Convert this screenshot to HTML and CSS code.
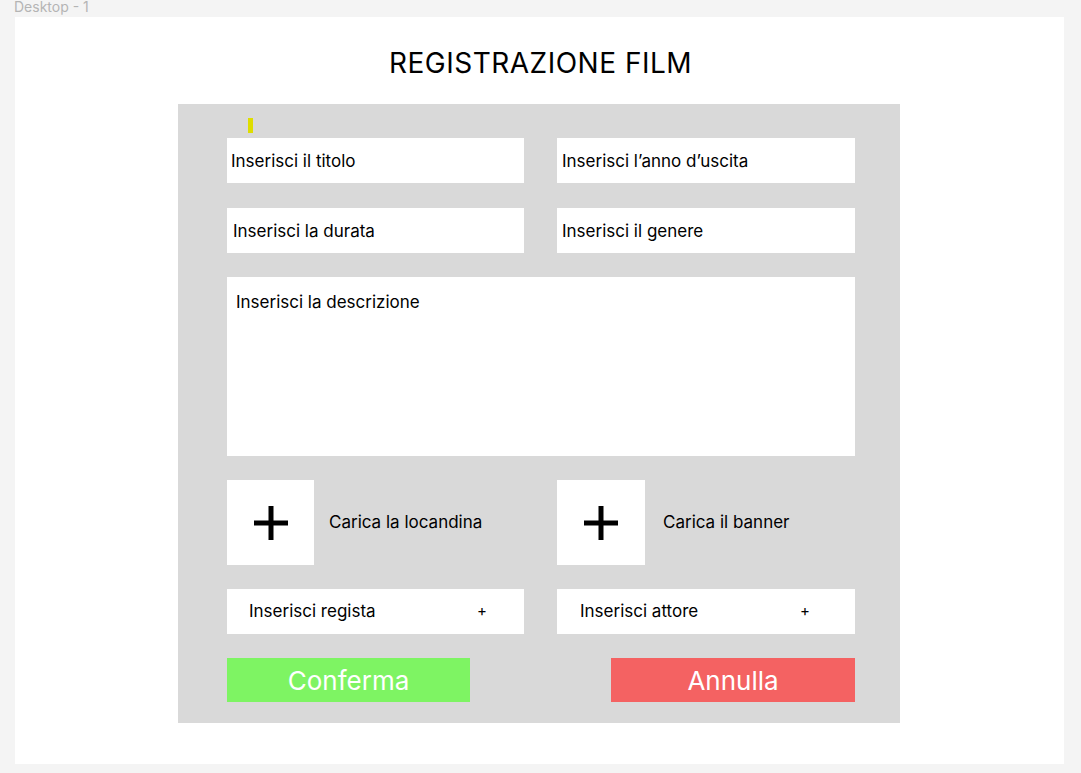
FILE: index.html
```html
<!DOCTYPE html>
<html lang="it">
<head>
<meta charset="utf-8">
<title>Registrazione film</title>
<link rel="stylesheet" href="styles.css">
</head>
<body>
<div class="canvas-label">Desktop - 1</div>
<main class="frame">
  <h1 class="title">REGISTRAZIONE FILM</h1>
  <section class="panel">
    <div class="marker"></div>
    <div class="row">
      <div class="field"><span class="ph ph-titolo">Inserisci il titolo</span></div>
      <div class="field"><span class="ph ph-anno">Inserisci l’anno d’uscita</span></div>
    </div>
    <div class="row">
      <div class="field"><span class="ph ph-durata">Inserisci la durata</span></div>
      <div class="field"><span class="ph ph-anno">Inserisci il genere</span></div>
    </div>
    <div class="textarea"><span class="ph">Inserisci la descrizione</span></div>
    <div class="row upload-row">
      <div class="upload">
        <div class="upload-box">
          <svg width="34" height="34" viewBox="0 0 34 34"><rect x="14.5" y="0" width="5" height="34" fill="#000"/><rect x="0" y="14.5" width="34" height="5" fill="#000"/></svg>
        </div>
        <span class="upload-label">Carica la locandina</span>
      </div>
      <div class="upload upload-right">
        <div class="upload-box">
          <svg width="34" height="34" viewBox="0 0 34 34"><rect x="14.5" y="0" width="5" height="34" fill="#000"/><rect x="0" y="14.5" width="34" height="5" fill="#000"/></svg>
        </div>
        <span class="upload-label">Carica il banner</span>
      </div>
    </div>
    <div class="row">
      <div class="field field-add field-regista"><span>Inserisci regista</span><span class="add">+</span></div>
      <div class="field field-add field-attore"><span>Inserisci attore</span><span class="add">+</span></div>
    </div>
    <div class="actions">
      <button class="btn btn-confirm">Conferma</button>
      <button class="btn btn-cancel">Annulla</button>
    </div>
  </section>
</main>
</body>
</html>
```

FILE: styles.css
```css
* { box-sizing: border-box; }
html, body { margin: 0; padding: 0; }
body {
  background: #f4f4f4;
  font-family: Inter, "Liberation Sans", sans-serif;
  font-optical-sizing: none;
  font-variation-settings: "opsz" 14;
  color: #000;
  width: 1081px;
  height: 773px;
  overflow: hidden;
}
.canvas-label {
  height: 17px;
  padding-left: 14px;
  font-size: 14px;
  line-height: 14px;
  color: #b4b4b4;
}
.frame {
  margin-left: 15px;
  width: 1049px;
  height: 747px;
  background: #fff;
  padding-top: 28px;
}
.title {
  margin: 0;
  height: 59px;
  font-size: 28px;
  font-weight: 400;
  letter-spacing: 0.5px;
  line-height: 36px;
  text-align: center;
  padding-left: 2px;
}
.panel {
  margin-left: 163px;
  width: 722px;
  height: 619px;
  background: #d9d9d9;
  padding: 14px 45px 0 49px;
  display: flex;
  flex-direction: column;
}
.marker {
  width: 5px;
  height: 15px;
  background: #dedd00;
  margin-left: 21px;
  margin-bottom: 5px;
}
.row {
  display: grid;
  grid-template-columns: 297px 298px;
  column-gap: 33px;
  margin-bottom: 25px;
}
.field {
  height: 45px;
  background: #fff;
  display: flex;
  align-items: center;
  font-size: 17px;
  padding-left: 4px;
}
.ph-durata { padding-left: 2px; }
.ph-anno { padding-left: 1px; }
.textarea {
  width: 628px;
  height: 179px;
  background: #fff;
  font-size: 17px;
  padding: 15px 0 0 9px;
  margin-top: -1px;
  margin-bottom: 24px;
}
.upload-row { margin-bottom: 24px; }
.upload {
  display: flex;
  align-items: center;
}
.upload-box {
  width: 87px;
  height: 85px;
  background: #fff;
  display: flex;
  align-items: center;
  justify-content: center;
  margin-right: 15px;
}
.upload-right .upload-box { width: 88px; margin-right: 18px; }
.upload-box svg { display: block; }
.upload-label {
  font-size: 17px;
  margin-top: -2px;
}
.field-add .add { margin-left: auto; font-size: 15px; }
.field-regista { padding: 0 37px 2px 22px; }
.field-attore { padding: 0 45px 2px 23px; }
.actions {
  display: flex;
  justify-content: space-between;
  margin-top: -1px;
}
.btn {
  border: 0;
  height: 44px;
  font-family: Inter, "Liberation Sans", sans-serif;
  font-size: 26px;
  color: #fff;
  padding: 0;
  line-height: 46px;
}
.btn-confirm { width: 243px; background: #7ef463; }
.btn-cancel { width: 244px; background: #f46262; }
```
